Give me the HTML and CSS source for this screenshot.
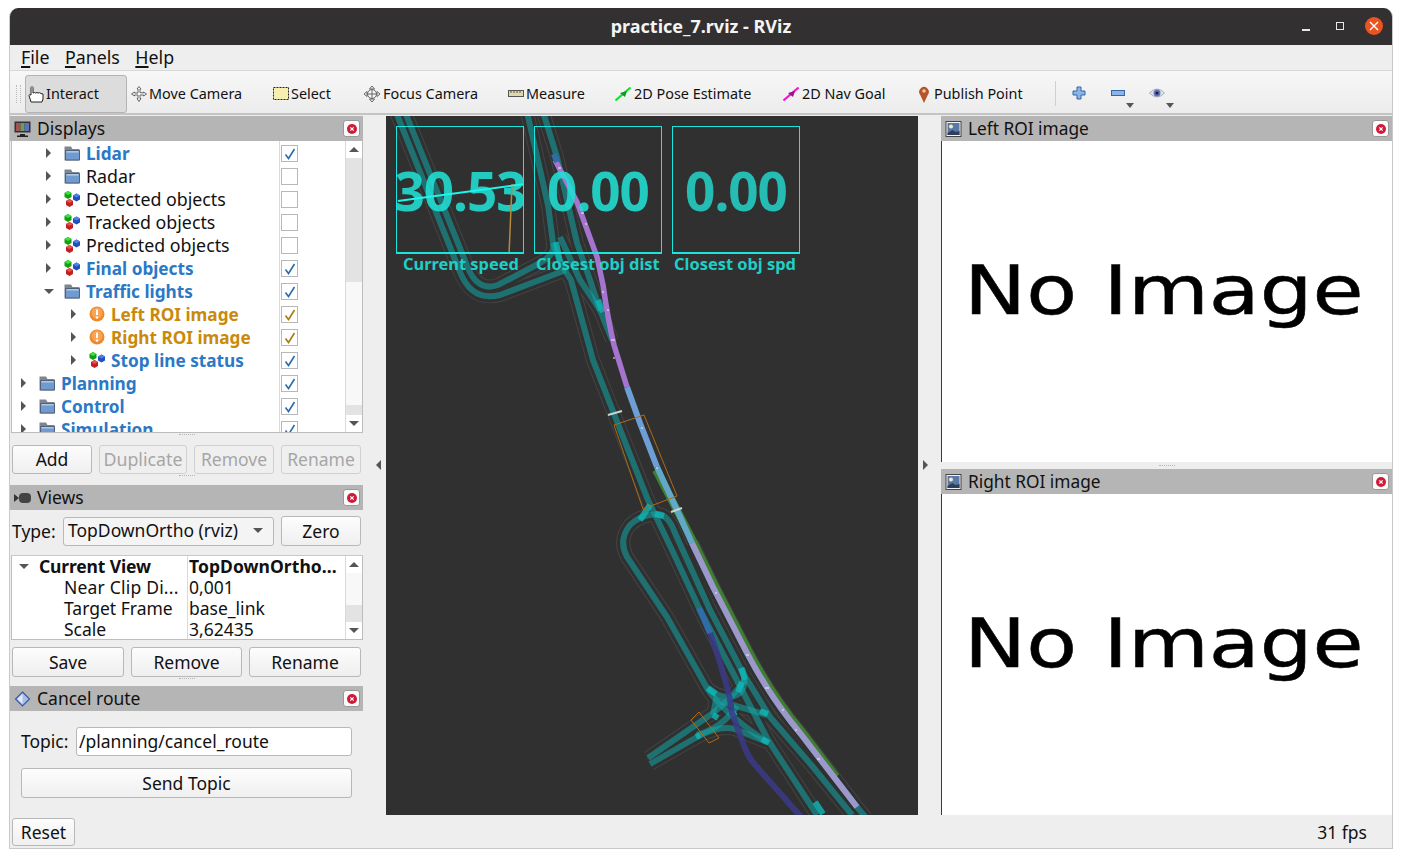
FILE: index.html
```html
<!DOCTYPE html>
<html lang="en">
<head>
<meta charset="utf-8">
<title>practice_7.rviz - RViz</title>
<link rel="stylesheet" href="styles.css">
</head>
<body>
<svg class="defs" width="0" height="0">
  <defs>
    <symbol id="folder" viewBox="0 0 16 16">
      <path d="M.5 15.500V1.500h6.500l1.500 2.500h7v11.500z" fill="#7f858f"/>
      <path d="M1.500 15V5.500h14V15z" fill="#6f9bd0" stroke="#51607a" stroke-width="1"/>
      <path d="M2.500 6.800h12" stroke="#c0d4ec" stroke-width="1.200"/>
    </symbol>
    <symbol id="cubes" viewBox="0 0 16 16">
      <path d="M4 0l3.500 2v4L4 8 .5 6V2z" fill="#10a010"/>
      <path d="M4 0l3.500 2L4 4 .5 2z" fill="#40e040"/>
      <path d="M12.500 2.500L16 4.500v4l-3.500 2-3.500-2v-4z" fill="#2050c0"/>
      <path d="M12.500 2.500L16 4.500l-3.500 2-3.500-2z" fill="#5080e8"/>
      <path d="M5.500 8L9 10v4l-3.500 2L2 14v-4z" fill="#c02020"/>
      <path d="M5.500 8L9 10l-3.500 2L2 10z" fill="#e85050"/>
    </symbol>
    <symbol id="warn" viewBox="0 0 16 16">
      <circle cx="8" cy="8" r="7.500" fill="#ef8a2a"/>
      <circle cx="8" cy="7" r="5.500" fill="#f6a455"/>
      <path d="M8 3.500v5.500" stroke="#fff" stroke-width="2"/>
      <circle cx="8" cy="11.500" r="1.200" fill="#fff"/>
    </symbol>
    <symbol id="picture" viewBox="0 0 16 16">
      <rect x=".5" y=".5" width="15" height="15" fill="#f4f4f4" stroke="#444"/>
      <rect x="2" y="2" width="12" height="12" fill="#5a78a8"/>
      <circle cx="5.500" cy="5.500" r="2" fill="#f0ecc0"/>
      <path d="M2 12l5-3 3 2 4-1v4H2z" fill="#2f3f5c"/>
    </symbol>
    <symbol id="check" viewBox="0 0 12 12">
      <path d="M1.500 6.500L4.500 10.500 10.500 1" fill="none" stroke-width="1.600"/>
    </symbol>
    <symbol id="close" viewBox="0 0 10 10">
      <circle cx="5" cy="5" r="5" fill="#cf1b3a"/>
      <path d="M3.300 3.300l3.400 3.400M6.700 3.300L3.300 6.700" stroke="#fff" stroke-width="1.200"/>
    </symbol>
    <g id="roads">
      <path d="M405 112L468 268Q478 292 498 285L540 263Q556 254 553 243L548 205L527 112"/>
      <path d="M396 112L460 272Q472 302 500 295L566 270"/>
      <path d="M553 243Q558 260 571 280L593 360L627 447L648 500L672 550L700 610L733 673L768 740L817 815"/>
      <path d="M543 112L557 157L570 213L577 243L590 280L600 310L612 340"/>
      <path d="M560 237L580 280L600 310"/>
      <path d="M707 688L667 617L627 557Q618 540 630 525Q640 515 657 514Q668 514 675 533L710 610L743 673L770 717L813 767L852 815"/>
      <path d="M692 543L713 587L747 653Q770 697 800 733L857 807L866 818"/>
      <path d="M707 688Q725 703 740 693Q748 683 742 668"/>
      <path d="M648 758L713 713Q730 700 745 680"/>
      <path d="M650 764L697 737Q725 722 742 732L767 742"/>
      <path d="M713 715L716 700L767 715"/>
      <path d="M697 735Q722 728 737 706"/>
      <path d="M707 688Q722 712 767 742"/>
    </g>
  </defs>
</svg>

<div class="window">
  <header class="titlebar">
    <span class="title">practice_7.rviz - RViz</span>
    <span class="wm">
      <span class="wm-min"></span>
      <span class="wm-max"></span>
      <span class="wm-close"><svg width="10" height="10" viewBox="0 0 10 10"><path d="M1 1l8 8M9 1L1 9" class="wm-x"/></svg></span>
    </span>
  </header>

  <nav class="menubar">
    <span class="menu"><u>F</u>ile</span>
    <span class="menu"><u>P</u>anels</span>
    <span class="menu"><u>H</u>elp</span>
  </nav>

  <div class="toolbar">
    <span class="grip"></span>
    <span class="tool tool-interact active">
      <svg width="17" height="18" viewBox="0 0 17 18"><path d="M3 17L1 10.500Q1 9 3 10V2.500Q4 .5 5 2.500V8l1.500-.5 1 .5 1.500-.5 1 .5 1.500-.3 1.500 .8 2 .5V14l-1 3z" class="ink"/></svg>
      <span>Interact</span>
    </span>
    <span class="tool tool-move">
      <svg width="16" height="16" viewBox="0 0 16 16"><path d="M8 .5L10 3H9v3.500L12.500 7V6L15.500 8 12.500 10V9H9v3.500h1L8 15.500 6 12.500h1V9H3.500v1L.5 8 3.500 6v1H7V3H6z" class="ink-gray"/></svg>
      <span>Move Camera</span>
    </span>
    <span class="tool tool-select">
      <svg width="16" height="14" viewBox="0 0 16 14"><rect x=".5" y=".5" width="15" height="12" fill="#f7efb0" stroke="#222" stroke-dasharray="2 1"/></svg>
      <span>Select</span>
    </span>
    <span class="tool tool-focus">
      <svg width="16" height="16" viewBox="0 0 16 16"><circle cx="8" cy="8" r="4.500" class="ink-gray"/><path d="M8 0L10.500 3h-5zM8 16l2.500-3h-5zM0 8l3-2.500v5zM16 8l-3-2.500v5zM8 3v10M3 8h10" class="ink-gray"/></svg>
      <span>Focus Camera</span>
    </span>
    <span class="tool tool-measure">
      <svg width="16" height="8" viewBox="0 0 16 8"><rect x=".5" y=".5" width="15" height="6" fill="#e0d8a8" stroke="#555"/><path d="M3 1v2M6 1v2M9 1v2M12 1v2" stroke="#555"/></svg>
      <span>Measure</span>
    </span>
    <span class="tool tool-pose">
      <svg width="16" height="14" viewBox="0 0 16 14"><path d="M.5 13.500L15.500 .5" stroke="#10e030" stroke-width="2"/><path d="M5 6l5 4 2-6z" fill="#0a9a20"/></svg>
      <span>2D Pose Estimate</span>
    </span>
    <span class="tool tool-goal">
      <svg width="16" height="14" viewBox="0 0 16 14"><path d="M.5 13.500L15.500 .5" stroke="#f010d0" stroke-width="2"/><path d="M5 6l5 4 2-6z" fill="#a0108a"/></svg>
      <span>2D Nav Goal</span>
    </span>
    <span class="tool tool-point">
      <svg width="10" height="17" viewBox="0 0 10 17"><path d="M5 17L1 8.500A4.800 4.800 0 1 1 9 8.500z" fill="#b5562a"/><circle cx="5" cy="5" r="1.800" fill="#f0c8a0"/></svg>
      <span>Publish Point</span>
    </span>
    <span class="tool-sep"></span>
    <span class="tool-icon tool-plus">
      <svg width="14" height="14" viewBox="0 0 14 14"><path d="M5 1h4v4h4v4H9v4H5V9H1V5h4z" fill="#8db4e6" stroke="#3466a8"/></svg>
    </span>
    <span class="tool-icon tool-minus">
      <svg width="14" height="8" viewBox="0 0 14 8"><rect x=".5" y="1.500" width="13" height="5" fill="#8db4e6" stroke="#3466a8"/></svg>
      <span class="drop"></span>
    </span>
    <span class="tool-icon tool-eye">
      <svg width="16" height="12" viewBox="0 0 16 12"><path d="M.5 6Q8-2 15.500 6 8 14 .5 6z" fill="#dfe4ee" stroke="#a8aeb8"/><circle cx="8" cy="6" r="3.500" fill="#6272b8"/><circle cx="8" cy="6" r="1.500" fill="#181c40"/></svg>
      <span class="drop"></span>
    </span>
  </div>

  <main class="main">
    <section class="left">
      <div class="dock-head">
        <svg class="dock-icon" width="17" height="16" viewBox="0 0 17 16"><rect x=".5" y=".5" width="16" height="11" fill="#333"/><rect x="2" y="2" width="4.500" height="8" fill="#a85050"/><rect x="6.500" y="2" width="4" height="8" fill="#60a060"/><rect x="10.500" y="2" width="4.500" height="8" fill="#6070b8"/><path d="M6 13h5v1.500h3V16H3v-1.500h3z" fill="#222"/></svg>
        <span class="dock-title">Displays</span>
        <span class="dock-close"><svg width="10" height="10"><use href="#close"/></svg></span>
      </div>
      <div class="tree">
        <div class="tree-rows">
          <div class="row d1 blue"><i class="arrow"></i><svg class="ico"><use href="#folder"/></svg><b>Lidar</b><span class="cb on"><svg><use href="#check"/></svg></span></div>
          <div class="row d1"><i class="arrow"></i><svg class="ico"><use href="#folder"/></svg><span class="lbl">Radar</span><span class="cb"></span></div>
          <div class="row d1"><i class="arrow"></i><svg class="ico"><use href="#cubes"/></svg><span class="lbl">Detected objects</span><span class="cb"></span></div>
          <div class="row d1"><i class="arrow"></i><svg class="ico"><use href="#cubes"/></svg><span class="lbl">Tracked objects</span><span class="cb"></span></div>
          <div class="row d1"><i class="arrow"></i><svg class="ico"><use href="#cubes"/></svg><span class="lbl">Predicted objects</span><span class="cb"></span></div>
          <div class="row d1 blue"><i class="arrow"></i><svg class="ico"><use href="#cubes"/></svg><b>Final objects</b><span class="cb on"><svg><use href="#check"/></svg></span></div>
          <div class="row d1 blue"><i class="arrow open"></i><svg class="ico"><use href="#folder"/></svg><b>Traffic lights</b><span class="cb on"><svg><use href="#check"/></svg></span></div>
          <div class="row d2 amber"><i class="arrow"></i><svg class="ico"><use href="#warn"/></svg><b>Left ROI image</b><span class="cb on"><svg><use href="#check"/></svg></span></div>
          <div class="row d2 amber"><i class="arrow"></i><svg class="ico"><use href="#warn"/></svg><b>Right ROI image</b><span class="cb on"><svg><use href="#check"/></svg></span></div>
          <div class="row d2 blue"><i class="arrow"></i><svg class="ico"><use href="#cubes"/></svg><b>Stop line status</b><span class="cb on"><svg><use href="#check"/></svg></span></div>
          <div class="row d0 blue"><i class="arrow"></i><svg class="ico"><use href="#folder"/></svg><b>Planning</b><span class="cb on"><svg><use href="#check"/></svg></span></div>
          <div class="row d0 blue"><i class="arrow"></i><svg class="ico"><use href="#folder"/></svg><b>Control</b><span class="cb on"><svg><use href="#check"/></svg></span></div>
          <div class="row d0 blue"><i class="arrow"></i><svg class="ico"><use href="#folder"/></svg><b>Simulation</b><span class="cb on"><svg><use href="#check"/></svg></span></div>
        </div>
        <div class="vscroll">
          <span class="sb-btn"><i class="tri-up"></i></span>
          <span class="sb-grey sb-a"></span>
          <span class="sb-white"></span>
          <span class="sb-grey sb-b"></span>
          <span class="sb-btn"><i class="tri-down"></i></span>
        </div>
      </div>
      <div class="handle h-a"></div>
      <div class="btn-row btn-row-a">
        <span class="btn b-add">Add</span>
        <span class="btn b-dup off">Duplicate</span>
        <span class="btn b-rem off">Remove</span>
        <span class="btn b-ren off">Rename</span>
      </div>
      <div class="handle h-b"></div>

      <div class="dock-head">
        <svg class="dock-icon" width="17" height="10" viewBox="0 0 17 10"><path d="M0 1l5 4-5 4z" fill="#333"/><rect x="5" y="0" width="12" height="10" rx="4" fill="#444"/></svg>
        <span class="dock-title">Views</span>
        <span class="dock-close"><svg width="10" height="10"><use href="#close"/></svg></span>
      </div>
      <div class="type-row">
        <span class="type-label">Type:</span>
        <span class="combo"><span>TopDownOrtho (rviz)</span><i class="tri-down"></i></span>
        <span class="btn b-zero">Zero</span>
      </div>
      <div class="props">
        <div class="prop-cols">
          <div class="prop-row prop-head"><span class="pk"><i class="arrow open"></i>Current View</span><span class="pv">TopDownOrtho...</span></div>
          <div class="prop-row"><span class="pk pk-in pk-near">Near Clip Di...</span><span class="pv">0,001</span></div>
          <div class="prop-row"><span class="pk pk-in">Target Frame</span><span class="pv">base_link</span></div>
          <div class="prop-row"><span class="pk pk-in">Scale</span><span class="pv">3,62435</span></div>
        </div>
        <div class="vscroll">
          <span class="sb-btn"><i class="tri-up"></i></span>
          <span class="sb-white"></span>
          <span class="sb-grey sb-c"></span>
          <span class="sb-btn"><i class="tri-down"></i></span>
        </div>
      </div>
      <div class="btn-row btn-row-b">
        <span class="btn b-save">Save</span>
        <span class="btn b-rem2">Remove</span>
        <span class="btn b-ren2">Rename</span>
      </div>
      <div class="handle h-c"></div>

      <div class="dock-head">
        <svg class="dock-icon" width="16" height="16" viewBox="0 0 16 16"><path d="M8 1l7 7-7 7-7-7z" fill="#a8bde8" stroke="#3c5a9c" stroke-width="1.200"/><path d="M8 3v10L3 8z" fill="#e2e9f8"/></svg>
        <span class="dock-title">Cancel route</span>
        <span class="dock-close"><svg width="10" height="10"><use href="#close"/></svg></span>
      </div>
      <div class="topic-row">
        <span class="topic-label">Topic:</span>
        <span class="input">/planning/cancel_route</span>
      </div>
      <span class="btn b-send">Send Topic</span>
    </section>

    <div class="gutter"><i class="tri-left"></i></div>

    <section class="viewport">
      <svg class="map" viewBox="386 116 532 699" width="532" height="699">
        <use href="#roads" class="r-edge"/>
        <use href="#roads" class="r-clear"/>
        <use href="#roads" class="r-teal"/>
        <path class="r-bright" d="M741 668L745 680M708 688L716 694M738 692L742 682M762 739L769 743M768 714L760 711M696 737L700 735M815 802L823 814M717 714L714 719M732 711L735 716M640 520L650 505M556 242L560 262M655 514L664 516M598 300L603 312"/>
        <path class="r-dark" d="M710 633L718 656L723 673Q730 695 732 713L743 743Q748 758 757 767L802 818"/>
        <path class="r-blue2" d="M699 608L710 633"/>
        <path class="r-green" d="M656 470L680 516L694 543L715 586L749 652Q772 696 802 732L836 777"/>
        <path class="r-purple" d="M555 160Q568 185 577 202L597 257L603 285Q608 320 614 345L627 387"/>
        <path class="r-blue" d="M627 387L640 423L657 467"/>
        <path class="r-sky" d="M657 467L677 510L692 543"/>
        <path class="r-lav" d="M692 543L713 587L747 653Q770 697 800 733L857 807"/>
        <path class="r-cap" d="M554 154L557 162"/>
        <path class="o-box" d="M614 425L644 415L677 496L643 509z"/>
        <path class="o-box" d="M691 720L699 712L719 738L709 743z"/>
        <path class="stop" d="M608 415L622 411M671 512L682 508"/>
        <path class="dots" d="M558 168h3M581 213h3M585 224h2M602 292h2M607 310h2M611 340h4M613 358h2M641 428h2M656 468h2M715 593h2M746 655h3M765 688h4M782 710h2M795 730h2M817 759h3"/>
      </svg>
      <div class="hud hud-a">
        <span class="hud-num">30.53</span>
        <svg class="hud-plot" viewBox="396 126 127 127"><path class="plot-o" d="M397 253.500H508L511 184H523"/><path class="plot-c" d="M397 200L523 183"/></svg>
      </div>
      <div class="hud hud-b"><span class="hud-num">0.00</span></div>
      <div class="hud hud-c"><span class="hud-num dim">0.00</span></div>
      <span class="hud-label lab-a">Current speed</span>
      <span class="hud-label lab-b">Closest obj dist</span>
      <span class="hud-label lab-c">Closest obj spd</span>
    </section>

    <div class="gutter gutter-r"><i class="tri-right"></i></div>

    <section class="right">
      <div class="dock-head">
        <svg class="dock-icon" width="16" height="16"><use href="#picture"/></svg>
        <span class="dock-title">Left ROI image</span>
        <span class="dock-close"><svg width="10" height="10"><use href="#close"/></svg></span>
      </div>
      <div class="image-pane"><span class="noimg">No Image</span></div>
      <div class="handle h-r"></div>
      <div class="dock-head">
        <svg class="dock-icon" width="16" height="16"><use href="#picture"/></svg>
        <span class="dock-title">Right ROI image</span>
        <span class="dock-close"><svg width="10" height="10"><use href="#close"/></svg></span>
      </div>
      <div class="image-pane"><span class="noimg">No Image</span></div>
    </section>
  </main>

  <footer class="status">
    <span class="btn b-reset">Reset</span>
    <span class="fps">31 fps</span>
  </footer>
</div>
</body>
</html>
```
FILE: styles.css
```css
* { box-sizing: border-box; }
html, body { margin: 0; padding: 0; height: 858px; overflow: hidden; background: #fff; }
body { padding: 8px 9px 9px 9px; font-family: "Noto Sans", "Open Sans", sans-serif; font-size: 17.500px; color: #111; }
.defs { position: absolute; }
.window { width: 1384px; height: 841px; background: #eeeeee; display: flex; flex-direction: column; border-radius: 9px 9px 0 0; overflow: hidden; border-bottom: 1px solid #c9c9c9; border-left: 1px solid #c9c9c9; border-right: 1px solid #c9c9c9; }

/* title */
.titlebar { height: 37px; flex: none; background: #323030; color: #f4f4f4; display: flex; align-items: center; justify-content: center; position: relative; }
.title { font-weight: 700; font-size: 18px; margin-top: -1px; }
.wm { position: absolute; right: 9px; top: 9px; display: flex; align-items: center; }
.wm-min { width: 8px; height: 1.500px; background: #e8e8e8; margin-top: 8px; margin-right: 26px; }
.wm-max { width: 8px; height: 8px; border: 1.500px solid #e8e8e8; margin-right: 21px; }
.wm-close { width: 18px; height: 18px; border-radius: 50%; background: #e95420; display: flex; align-items: center; justify-content: center; }
.wm-x { stroke: #fff; stroke-width: 1.400; fill: none; }

/* menu */
.menubar { height: 26px; flex: none; display: flex; gap: 15.500px; padding: 0 0 2px 11px; align-items: center; border-bottom: 1px solid #d8d8d8; font-size: 17.800px; }
.menu u { text-underline-offset: 2px; text-decoration-thickness: 1.500px; }

/* toolbar */
.toolbar { height: 44px; flex: none; display: flex; align-items: center; background: linear-gradient(#f7f7f7, #ececec); border-bottom: 2px solid #c4c4c4; font-size: 14.400px; position: relative; }
.grip { position: absolute; left: 6px; top: 14px; width: 5px; height: 18px; border-left: 1px dotted #bbb; border-right: 1px dotted #bbb; }
.tool { position: absolute; top: 4px; height: 38px; display: flex; align-items: center; white-space: nowrap; }
.tool span { margin-top: -2px; }
.tool.active { left: 15px; width: 102px; background: #dcdcdc; border: 1px solid #b4b4b4; border-radius: 3px; padding-left: 2px; gap: 1px; }
.tool-move { left: 121px; gap: 2px; }
.tool-select { left: 263px; gap: 2px; }
.tool-focus { left: 354px; gap: 3px; }
.tool-measure { left: 498px; gap: 2px; }
.tool-pose { left: 605px; gap: 3px; }
.tool-goal { left: 773px; gap: 3px; }
.tool-point { left: 909px; gap: 5px; }
.tool-sep { position: absolute; left: 1045px; top: 10px; width: 1px; height: 25px; background: #d0d0d0; }
.tool-icon { position: absolute; top: 4px; height: 36px; display: flex; align-items: center; }
.tool-plus { left: 1062px; }
.tool-minus { left: 1101px; }
.tool-eye { left: 1139px; }
.drop { position: absolute; left: 15px; top: 28px; width: 0; height: 0; border-left: 4px solid transparent; border-right: 4px solid transparent; border-top: 5px solid #555; }
.tool-eye .drop { left: 17px; }
.ink { fill: #fff; stroke: #222; stroke-width: 1; }
.ink-gray { fill: #f6f6f6; stroke: #666; stroke-width: 1; }

/* main */
.main { flex: none; height: 700px; display: flex; }
.left { width: 353px; flex: none; display: flex; flex-direction: column; margin-top: 1px; position: relative; }
.right { width: 451px; flex: none; display: flex; flex-direction: column; margin-top: 1px; }
.gutter { width: 23px; flex: none; display: flex; align-items: center; padding-left: 13px; }
.gutter-r { padding-left: 5px; }
.tri-left { width: 0; height: 0; border-top: 5px solid transparent; border-bottom: 5px solid transparent; border-right: 5px solid #555; }
.tri-right { width: 0; height: 0; border-top: 5px solid transparent; border-bottom: 5px solid transparent; border-left: 5px solid #555; }

.dock-head { height: 25px; flex: none; background: #b5b5b5; display: flex; align-items: center; position: relative; padding-left: 4px; }
.dock-icon { flex: none; width: 17px; }
.dock-title { margin: -2px 0 0 6px; font-size: 17.500px; }
.right .dock-title { font-size: 17.300px; margin-top: 0; }
.dock-close { position: absolute; right: 3px; top: 4px; width: 17px; height: 17px; background: #fbfbfb; border: 1px solid #999; border-radius: 3px; display: flex; align-items: center; justify-content: center; }
.dock-close svg { display: block; }

/* tree */
.tree { height: 292px; flex: none; margin-left: 1px; background: #fff; display: flex; border-bottom: 1px solid #bdbdbd; border-left: 1px solid #bdbdbd; border-right: 1px solid #bdbdbd; overflow: hidden; }
.tree-rows { flex: 1; position: relative; overflow: hidden; background: linear-gradient(#d9d9d9, #d9d9d9) 267px 0 / 1px 100% no-repeat; }
.row { height: 23px; display: flex; align-items: center; position: relative; white-space: nowrap; }
.row b { font-weight: 700; font-size: 17.200px; }
.row .lbl { font-size: 17.800px; }
.blue { color: #2b78c6; }
.amber { color: #c98a0a; }
.arrow { display: block; position: absolute; top: 7px; width: 0; height: 0; border-top: 5px solid transparent; border-bottom: 5px solid transparent; border-left: 5px solid #555; }
.arrow.open { top: 10px; border-top: 5px solid #555; border-bottom: 0; border-left: 5px solid transparent; border-right: 5px solid transparent; }
.ico { position: absolute; top: 4px; width: 16px; height: 16px; }
.row .lbl { position: absolute; top: 0; }
.row b { position: absolute; top: 1px; }
.d0 .arrow { left: 9px; } .d0 .ico { left: 27px; } .d0 b, .d0 .lbl { left: 49px; }
.d1 .arrow { left: 34px; } .d1 .ico { left: 52px; } .d1 b, .d1 .lbl { left: 74px; }
.d2 .arrow { left: 59px; } .d2 .ico { left: 77px; } .d2 b, .d2 .lbl { left: 99px; }
.d1 .arrow.open { left: 32px; }
.cb { position: absolute; left: 269px; top: 4px; width: 17px; height: 17px; border: 1px solid #b8b8b8; background: #fff; display: flex; align-items: center; justify-content: center; }
.cb svg { width: 12px; height: 12px; stroke: #2a6cae; fill: none; }
.amber .cb svg { stroke: #a87a10; }

.vscroll { width: 17px; flex: none; display: flex; flex-direction: column; border-left: 1px solid #d9d9d9; }
.sb-btn { height: 17px; flex: none; display: flex; align-items: center; justify-content: center; background: #fff; }
.sb-grey { background: #e3e3e3; flex: none; }
.sb-a { height: 124px; }
.sb-b { height: 10px; }
.sb-c { height: 17px; }
.sb-white { flex: 1; background: #f8f8f8; }
.tri-up { width: 0; height: 0; border-left: 5px solid transparent; border-right: 5px solid transparent; border-bottom: 5px solid #555; }
.tri-down { width: 0; height: 0; border-left: 5px solid transparent; border-right: 5px solid transparent; border-top: 5px solid #555; }

.handle { flex: none; position: relative; }
.handle::after { content: ""; position: absolute; left: 50%; top: 1px; width: 16px; margin-left: -8px; border-top: 1px dotted #b5b5b5; }
.h-a { height: 12px; }
.h-b { height: 11px; }
.h-c { height: 9px; }
.h-r { height: 7px; }
.h-r::after { top: 3px; }

/* buttons */
.btn { display: flex; align-items: center; justify-content: center; background: linear-gradient(#fdfdfd, #efefef); border: 1px solid #b8b8b8; border-radius: 3px; font-size: 17.500px; white-space: nowrap; padding-bottom: 1px; }
.btn.off { color: #a6a6a6; border-color: #d0d0d0; background: #efefef; }
.btn-row { display: flex; flex: none; padding-left: 2px; gap: 7px; }
.btn-row-a { height: 29px; }
.btn-row-b { height: 30px; margin-top: 7px; }
.b-add { width: 80px; }
.b-dup { width: 88px; font-size: 17.800px; }
.b-rem, .b-ren { width: 80px; }
.b-save { width: 112px; }
.b-rem2 { width: 111px; }
.b-ren2 { width: 112px; }

.type-row { height: 30px; flex: none; display: flex; align-items: center; margin-top: 6px; padding-left: 2px; }
.type-label { width: 51px; }
.combo { width: 211px; height: 29px; background: #f4f4f4; border: 1px solid #b8b8b8; border-radius: 3px; display: flex; align-items: center; justify-content: space-between; padding: 0 10px 2px 4px; }
.b-zero { width: 80px; height: 30px; margin-left: 7px; }

.props { height: 85px; flex: none; margin-top: 9px; margin-left: 1px; background: #fff; display: flex; border: 1px solid #bdbdbd; border-top-color: #c8c8c8; overflow: hidden; }
.prop-cols { flex: 1; background: linear-gradient(#d9d9d9, #d9d9d9) 175px 0 / 1px 100% no-repeat; }
.prop-row { height: 21px; display: flex; white-space: nowrap; line-height: 20px; }
.pk { width: 176px; position: relative; flex: none; }
.pk-in { padding-left: 52px; }
.pk-near { letter-spacing: .2px; }
.pv { padding-left: 1px; }
.prop-head { font-weight: 700; }
.prop-head .pk { padding-left: 27px; letter-spacing: -.15px; }
.prop-head .pv { letter-spacing: .05px; }
.pk .arrow.open { left: 7px; top: 8px; }

.topic-row { height: 29px; flex: none; display: flex; align-items: center; margin-top: 16px; padding-left: 11px; }
.topic-label { width: 55px; padding-bottom: 1px; }
.input { width: 276px; height: 29px; background: #fff; border: 1px solid #b8b8b8; border-radius: 3px; display: flex; align-items: center; padding: 0 0 2px 2px; }
.b-send { width: 331px; height: 30px; flex: none; margin: 12px 0 0 11px; }

/* viewport */
.viewport { width: 532px; height: 699px; margin-top: 1px; flex: none; background: #303030; position: relative; overflow: hidden; }
.map { display: block; position: absolute; left: 0; top: 0; }
.r-edge, .r-clear, .r-teal, .r-bright, .r-dark, .r-blue2, .r-green, .r-purple, .r-blue, .r-sky, .r-lav, .r-cap, .o-box, .stop, .dots { fill: none; }
.r-edge { stroke: #444; stroke-width: 14; }
.r-clear { stroke: #303030; stroke-width: 12; }
.r-teal { stroke: #12a8a8; stroke-opacity: .55; stroke-width: 6; }
.r-bright { stroke: #12b5b5; stroke-width: 6; stroke-opacity: .8; }
.r-dark { stroke: #3a3a88; stroke-width: 6; stroke-opacity: .85; }
.r-blue2 { stroke: #2f6ca8; stroke-width: 6; }
.r-green { stroke: #3f7f32; stroke-width: 8; }
.r-purple { stroke: #a474cf; stroke-width: 5.500; }
.r-blue { stroke: #6d9ed6; stroke-width: 6; }
.r-sky { stroke: #62a8c8; stroke-width: 6; }
.r-lav { stroke: #9c98cc; stroke-width: 6; }
.r-cap { stroke: #2f6ca8; stroke-width: 6; }
.o-box { stroke: #b06a14; stroke-width: 1; }
.stop { stroke: #c8d6d4; stroke-width: 2; }
.dots { stroke: #e8f4e8; stroke-width: 1; }

.hud { position: absolute; top: 10px; width: 128px; height: 128px; border: 1px solid #1ae6de; border-bottom-width: 2px; display: flex; align-items: center; justify-content: center; overflow: hidden; }
.hud-a { left: 10px; }
.hud-b { left: 148px; }
.hud-c { left: 286px; }
.hud-num { font-size: 53px; font-weight: 700; line-height: 1; color: #22e0d4; opacity: .88; letter-spacing: -1px; white-space: nowrap; margin-top: 2px; }
.hud-num.dim { opacity: .8; }
.hud-plot { position: absolute; left: 0; top: 0; width: 127px; height: 127px; }
.plot-o { fill: none; stroke: #b58a3c; stroke-width: 1.500; }
.plot-c { fill: none; stroke: #1cf4ec; stroke-width: 2; }
.hud-label { position: absolute; top: 137px; font-weight: 700; font-size: 16.400px; line-height: 22px; color: #1fcfc6; white-space: nowrap; }
.lab-a { left: 17px; }
.lab-b { left: 150px; }
.lab-c { left: 288px; }

/* images */
.image-pane { flex: 1; background: #fff; border-left: 1px solid #3a3a3a; position: relative; overflow: hidden; }
.noimg { position: absolute; left: 22px; top: 100px; font-family: "DejaVu Sans", sans-serif; font-size: 67px; line-height: 100px; color: #000; -webkit-text-stroke: .5px #000; transform: scaleX(1.240); transform-origin: 0 0; white-space: nowrap; }

/* status */
.status { flex: 1; position: relative; display: flex; align-items: flex-start; justify-content: space-between; padding: 3px 25px 0 2px; }
.b-reset { width: 63px; height: 28px; }
.fps { margin-top: 2px; }
```
